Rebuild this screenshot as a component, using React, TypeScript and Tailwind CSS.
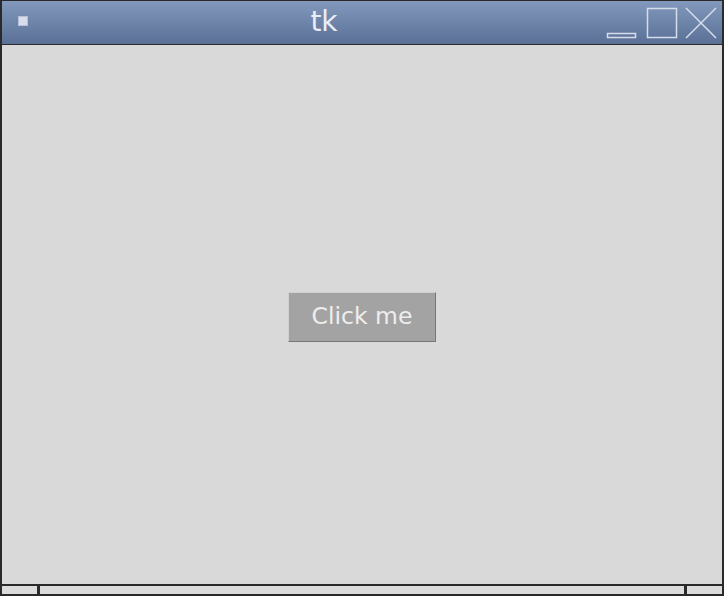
import React from "react";

export default function App() {
  return (
    <div className="w-[724px] h-[596px] flex flex-col bg-[#2a2a2a] overflow-hidden" style={{ fontFamily: '"DejaVu Sans", sans-serif' }}>
      {/* title bar */}
      <div className="h-[43px] mx-[2px] mt-[1px] shrink-0 relative flex items-center justify-center bg-gradient-to-b from-[#8299bd] to-[#5a7096]">
        <div className="absolute left-[16px] top-[15px] w-[10px] h-[10px] bg-[#d9dcea] border border-[#b8bfd6]" />
        <span className="text-[28px] leading-none text-[#e8edf6] -mt-[1px] -ml-[76px]">tk</span>
        <svg className="absolute right-[2px] top-0" width="118" height="43" viewBox="0 0 118 43">
          <rect x="5.5" y="32.5" width="28" height="4" fill="none" stroke="#d5dcea" strokeWidth="1.5" />
          <rect x="45.5" y="7.5" width="29" height="29" fill="none" stroke="#d5dcea" strokeWidth="1.5" />
          <path d="M84 7 L114 37 M114 7 L84 37" stroke="#d5dcea" strokeWidth="1.5" fill="none" />
        </svg>
      </div>
      <div className="h-[1px] shrink-0" />
      {/* content */}
      <div className="flex-1 mx-[2px] bg-[#d9d9d9] flex items-center justify-center">
        <button className="w-[148px] h-[50px] mt-[4px] bg-[#a3a3a3] border border-t-[#d0d0d0] border-l-[#d0d0d0] border-b-[#777] border-r-[#777] text-[#eeeeee] text-[23.5px] leading-none flex items-center justify-center">
          Click me
        </button>
      </div>
      {/* bottom bar */}
      <div className="h-[2px] shrink-0" />
      <div className="h-[8px] mx-[2px] shrink-0 flex gap-[3px]">
        <div className="w-[35px] bg-[#dcdcdc]" />
        <div className="flex-1 bg-[#dcdcdc]" />
        <div className="w-[35px] bg-[#dcdcdc]" />
      </div>
      <div className="h-[2px] shrink-0" />
    </div>
  );
}
